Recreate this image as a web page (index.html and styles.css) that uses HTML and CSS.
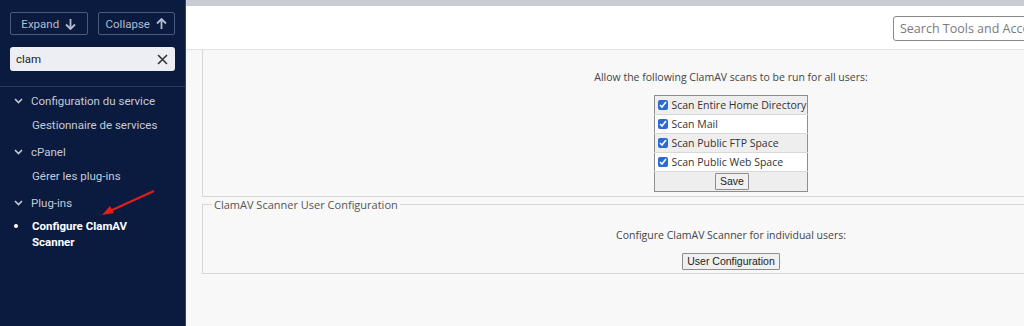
FILE: index.html
```html
<!DOCTYPE html>
<html lang="fr">
<head>
<meta charset="utf-8">
<title>Configure ClamAV Scanner</title>
<link rel="stylesheet" href="styles.css">
</head>
<body>
<div class="app">
  <aside class="sidebar">
    <div class="side-top">
      <div class="btn-row">
        <button class="side-btn">Expand
          <svg width="11" height="12" viewBox="0 0 11 12"><path d="M5.5 1v10M1 6.5l4.5 4.5 4.5-4.5" fill="none" stroke="currentColor" stroke-width="1.8"/></svg>
        </button>
        <button class="side-btn">Collapse
          <svg width="11" height="12" viewBox="0 0 11 12"><path d="M5.5 11V1M1 5.5l4.5-4.5 4.5 4.5" fill="none" stroke="currentColor" stroke-width="1.8"/></svg>
        </button>
      </div>
      <div class="side-search">
        <span class="side-search-text">clam</span>
        <svg class="clear" width="11" height="11" viewBox="0 0 11 11"><path d="M1 1l9 9M10 1l-9 9" stroke="#333" stroke-width="1.6"/></svg>
      </div>
    </div>
    <nav class="menu">
      <div class="group">
        <div class="group-head"><svg class="chev" width="9" height="6" viewBox="0 0 9 6"><path d="M1 1l3.5 3.5L8 1" fill="none" stroke="currentColor" stroke-width="1.6"/></svg>Configuration du service</div>
        <div class="item">Gestionnaire de services</div>
      </div>
      <div class="group">
        <div class="group-head"><svg class="chev" width="9" height="6" viewBox="0 0 9 6"><path d="M1 1l3.5 3.5L8 1" fill="none" stroke="currentColor" stroke-width="1.6"/></svg>cPanel</div>
        <div class="item">Gérer les plug-ins</div>
      </div>
      <div class="group">
        <div class="group-head"><svg class="chev" width="9" height="6" viewBox="0 0 9 6"><path d="M1 1l3.5 3.5L8 1" fill="none" stroke="currentColor" stroke-width="1.6"/></svg>Plug-ins</div>
        <div class="item active"><span class="dot"></span>Configure ClamAV<br>Scanner</div>
      </div>
    </nav>
    <svg class="red-arrow" width="60" height="30" viewBox="0 0 60 30">
      <path d="M56 2L12 22" stroke="#e0201c" stroke-width="2" fill="none"/>
      <path d="M4 26l8-9 4 7z" fill="#e0201c"/>
    </svg>
  </aside>
  <main class="main">
    <div class="strip"></div>
    <header class="topbar">
      <input class="top-search" type="text" placeholder="Search Tools and Accounts (/)">
    </header>
    <section class="content">
      <fieldset class="box first">
        <p class="lead">Allow the following ClamAV scans to be run for all users:</p>
        <table class="scans">
          <tr class="alt"><td><label><input type="checkbox" checked> Scan Entire Home Directory</label></td></tr>
          <tr><td><label><input type="checkbox" checked> Scan Mail</label></td></tr>
          <tr class="alt"><td><label><input type="checkbox" checked> Scan Public FTP Space</label></td></tr>
          <tr><td><label><input type="checkbox" checked> Scan Public Web Space</label></td></tr>
          <tr class="alt"><td class="center"><button class="plain-btn">Save</button></td></tr>
        </table>
      </fieldset>
      <fieldset class="box second">
        <legend>ClamAV Scanner User Configuration</legend>
        <p class="lead tight">Configure ClamAV Scanner for individual users:</p>
        <div class="center"><button class="plain-btn">User Configuration</button></div>
      </fieldset>
    </section>
  </main>
</div>
</body>
</html>
```
FILE: styles.css
```css
html, body {
  margin: 0;
  padding: 0;
  height: 100%;
  overflow: hidden;
  background: #f8f8f8;
}

.app {
  display: flex;
  height: 326px;
  width: 1024px;
  overflow: hidden;
}

.sidebar {
  position: relative;
  flex: 0 0 185px;
  width: 185px;
  background: #0b1b3f;
  border-right: 1px solid #34456a;
  font-family: Roboto, "Noto Sans", sans-serif;
  color: #c4cad8;
}

.side-top {
  padding: 12px 10px 15px;
  border-bottom: 1px solid #2b3b5f;
}

.btn-row {
  display: flex;
  gap: 10px;
}

.side-btn {
  flex: 1;
  height: 23px;
  box-sizing: border-box;
  background: transparent;
  border: 1px solid #4b5b7d;
  border-radius: 2px;
  color: #b4bccf;
  font-family: Roboto, "Noto Sans", sans-serif;
  font-size: 11.5px;
  display: flex;
  align-items: center;
  justify-content: center;
  gap: 6px;
  padding: 0;
}

.side-search {
  margin-top: 12px;
  height: 24px;
  box-sizing: border-box;
  background: #eceef3;
  border-radius: 3px;
  display: flex;
  align-items: center;
  justify-content: space-between;
  padding: 0 7px 0 6px;
}

.side-search-text {
  color: #222;
  font-size: 11.5px;
}

.menu {
  padding-top: 3px;
  font-size: 11.5px;
}

.group {
  margin-bottom: 5px;
}

.group-head {
  height: 22px;
  line-height: 22px;
  display: flex;
  align-items: center;
  padding-left: 14px;
}

.chev {
  margin-right: 8px;
  color: #c4cad8;
}

.item {
  height: 22px;
  line-height: 22px;
  padding-left: 32px;
  margin-top: 2px;
}

.item.active {
  position: relative;
  height: auto;
  line-height: 16px;
  padding-top: 3px;
  margin-top: 1px;
  font-weight: bold;
  color: #ffffff;
}

.dot {
  position: absolute;
  left: 14px;
  top: 9px;
  width: 4px;
  height: 4px;
  border-radius: 50%;
  background: #ffffff;
}

.red-arrow {
  position: absolute;
  left: 98px;
  top: 189px;
}

.main {
  flex: 0 0 1090px;
  width: 1090px;
  display: flex;
  flex-direction: column;
}

.strip {
  height: 6px;
  background: #c9ccd5;
}

.topbar {
  height: 44px;
  box-sizing: border-box;
  background: #ffffff;
  border-bottom: 1px solid #e3e3e3;
  display: flex;
  align-items: center;
  justify-content: flex-end;
  padding: 0 16px 0 0;
}

.top-search {
  width: 367px;
  height: 25px;
  box-sizing: border-box;
  border: 1px solid #8a8a8a;
  border-radius: 3px;
  padding: 0 6px;
  font-family: "Open Sans", sans-serif;
  font-size: 12.5px;
  color: #333;
  margin-top: 1px;
}

.top-search::placeholder {
  color: #7a7a7a;
}

.content {
  padding: 0 16px 0 16px;
  font-family: "Open Sans", sans-serif;
  color: #444;
}

.box {
  margin: 0;
  border: 1px solid #d6d6d6;
  padding: 0;
  background: #f8f8f8;
}

.box.first {
  border-top: none;
  padding-top: 19px;
  padding-bottom: 4px;
}

.box.second {
  margin-top: 0;
  padding-top: 15px;
  padding-bottom: 3px;
}

legend {
  margin-left: 9px;
  padding: 0 2px;
  font-size: 11px;
  color: #555;
}

.lead {
  margin: 0 0 10px;
  text-align: center;
  font-size: 10.5px;
  line-height: 16px;
}

.lead.tight {
  margin-bottom: 5px;
}

.scans {
  margin: 0 auto;
  border-collapse: collapse;
  border: 1px solid #8e8e8e;
}

.scans td {
  padding: 0 1px 0 3px;
  height: 18px;
  border-bottom: 1px solid #d8d8d8;
  font-size: 10.5px;
  color: #333;
  white-space: nowrap;
}

.scans tr:last-child td {
  height: 19px;
  border-bottom: none;
}

.scans tr {
  background: #ffffff;
}

.scans tr.alt {
  background: #eeeeee;
}

.scans input {
  width: 10px;
  height: 10px;
  margin: 0 1px 0 0;
  vertical-align: -1px;
  accent-color: #2a6bd2;
}

.center {
  text-align: center;
}

.plain-btn {
  font-family: "Liberation Sans", Arial, sans-serif;
  font-size: 10.5px;
  color: #222;
  background: #f0f0f0;
  border: 1px solid #8d8d8d;
  border-radius: 1px;
  padding: 1px 4px;
  height: 17px;
  line-height: 13px;
}
```
